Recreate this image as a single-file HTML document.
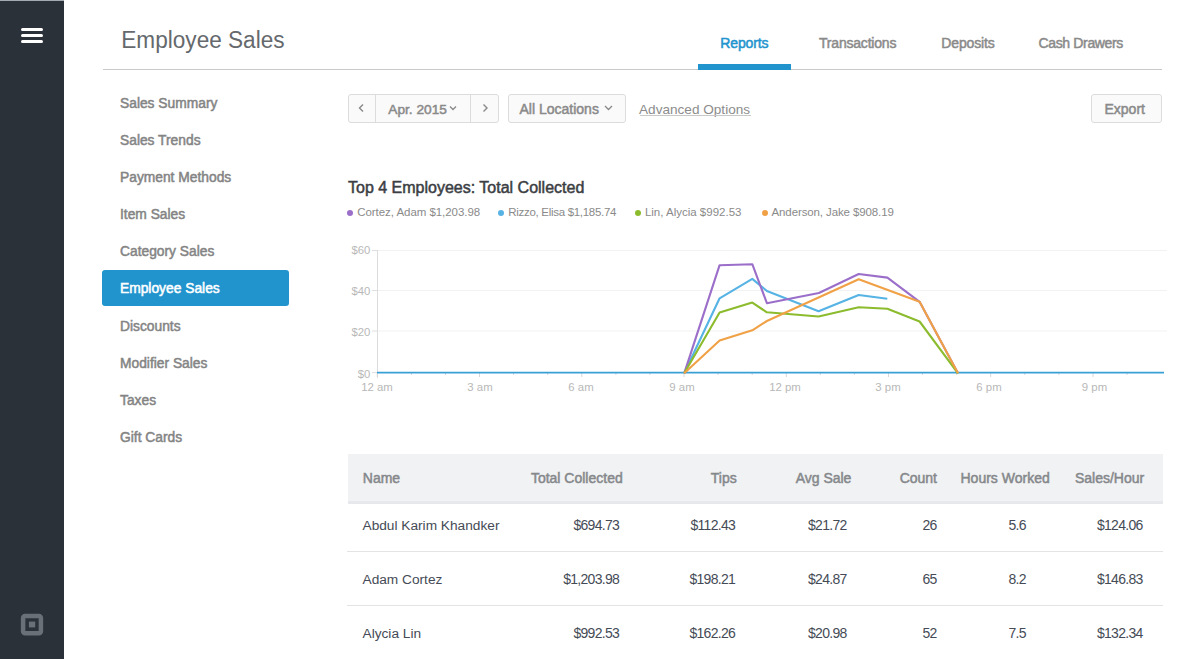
<!DOCTYPE html>
<html><head><meta charset="utf-8"><style>
html,body{margin:0;padding:0;width:1200px;height:659px;overflow:hidden;background:#fff;}
body{position:relative;font-family:"Liberation Sans",sans-serif;}
.t{position:absolute;white-space:nowrap;}
</style></head><body>
<div style="position:absolute;left:0;top:0;width:64px;height:659px;background:#2b3139"></div>
<div style="position:absolute;left:0;top:0;width:64px;height:1px;background:#a4aab0"></div>
<div style="position:absolute;left:21px;top:28px;width:22px;height:3px;border-radius:1.5px;background:#fff"></div>
<div style="position:absolute;left:21px;top:34px;width:22px;height:3px;border-radius:1.5px;background:#fff"></div>
<div style="position:absolute;left:21px;top:40px;width:22px;height:3px;border-radius:1.5px;background:#fff"></div>
<svg style="position:absolute;left:0;top:600px" width="64" height="50"><rect x="23.1" y="16.1" width="17.8" height="17.2" rx="2" fill="none" stroke="#6a7078" stroke-width="4.5"/><rect x="28.9" y="21.6" width="6.3" height="5.8" fill="#6a7078"/></svg>
<div class="t" style="left:121.3px;top:24.57px;font-size:22.6px;line-height:32px;color:#65696d;font-weight:400;transform:scaleY(1.08);transform-origin:0 23.8px;">Employee Sales</div>

<div style="position:absolute;left:103px;top:69px;width:1059px;height:1px;background:#c9c9c9"></div>
<div style="position:absolute;left:698px;top:64px;width:93px;height:6px;background:#2194ce"></div>
<div class="t" style="left:720.3px;top:33.15px;font-size:14px;line-height:20px;color:#2194ce;font-weight:400;-webkit-text-stroke:0.5px currentColor;letter-spacing:-0.15px;">Reports</div>

<div class="t" style="left:819px;top:33.15px;font-size:14px;line-height:20px;color:#8a8a8a;font-weight:400;-webkit-text-stroke:0.5px currentColor;letter-spacing:-0.2px;">Transactions</div>

<div class="t" style="left:941.3px;top:33.15px;font-size:14px;line-height:20px;color:#8a8a8a;font-weight:400;-webkit-text-stroke:0.5px currentColor;letter-spacing:-0.15px;">Deposits</div>

<div class="t" style="left:1038.5px;top:33.15px;font-size:14px;line-height:20px;color:#8a8a8a;font-weight:400;-webkit-text-stroke:0.5px currentColor;letter-spacing:-0.35px;">Cash Drawers</div>

<div style="position:absolute;left:102px;top:270px;width:187px;height:36px;background:#2194ce;border-radius:3px"></div>
<div class="t" style="left:120px;top:93.72px;font-size:13.8px;line-height:19px;color:#848484;font-weight:400;-webkit-text-stroke:0.5px currentColor;">Sales Summary</div>

<div class="t" style="left:120px;top:130.87px;font-size:13.8px;line-height:19px;color:#848484;font-weight:400;-webkit-text-stroke:0.5px currentColor;">Sales Trends</div>

<div class="t" style="left:120px;top:168.02px;font-size:13.8px;line-height:19px;color:#848484;font-weight:400;-webkit-text-stroke:0.5px currentColor;">Payment Methods</div>

<div class="t" style="left:120px;top:205.17px;font-size:13.8px;line-height:19px;color:#848484;font-weight:400;-webkit-text-stroke:0.5px currentColor;">Item Sales</div>

<div class="t" style="left:120px;top:242.32px;font-size:13.8px;line-height:19px;color:#848484;font-weight:400;-webkit-text-stroke:0.5px currentColor;">Category Sales</div>

<div class="t" style="left:120px;top:279.47px;font-size:13.8px;line-height:19px;color:#ffffff;font-weight:400;-webkit-text-stroke:0.5px currentColor;">Employee Sales</div>

<div class="t" style="left:120px;top:316.62px;font-size:13.8px;line-height:19px;color:#848484;font-weight:400;-webkit-text-stroke:0.5px currentColor;">Discounts</div>

<div class="t" style="left:120px;top:353.77px;font-size:13.8px;line-height:19px;color:#848484;font-weight:400;-webkit-text-stroke:0.5px currentColor;">Modifier Sales</div>

<div class="t" style="left:120px;top:390.92px;font-size:13.8px;line-height:19px;color:#848484;font-weight:400;-webkit-text-stroke:0.5px currentColor;">Taxes</div>

<div class="t" style="left:120px;top:428.07px;font-size:13.8px;line-height:19px;color:#848484;font-weight:400;-webkit-text-stroke:0.5px currentColor;">Gift Cards</div>

<div style="position:absolute;left:348px;top:94px;width:149px;height:27px;border:1px solid #dcdcdc;border-radius:3px;background:#fafafa"></div>
<div style="position:absolute;left:375px;top:95px;width:1px;height:27px;background:#dcdcdc"></div>
<div style="position:absolute;left:470px;top:95px;width:1px;height:27px;background:#dcdcdc"></div>
<div class="t" style="left:388.3px;top:99.65px;font-size:13.7px;line-height:19px;color:#8a8a8a;font-weight:400;-webkit-text-stroke:0.5px currentColor;">Apr. 2015</div>

<div style="position:absolute;left:508px;top:94px;width:116px;height:27px;border:1px solid #dcdcdc;border-radius:3px;background:#fafafa"></div>
<svg style="position:absolute;left:0;top:0" width="1200" height="659"><polyline points="363,104.5 359.5,108 363,111.5" fill="none" stroke="#888" stroke-width="1.4"/><polyline points="483.5,104.5 487,108 483.5,111.5" fill="none" stroke="#888" stroke-width="1.4"/><polyline points="450,106.5 453,109.5 456,106.5" fill="none" stroke="#888" stroke-width="1.3"/><polyline points="605,106 608.5,109.5 612,106" fill="none" stroke="#888" stroke-width="1.3"/></svg>
<div class="t" style="left:519.5px;top:99.15px;font-size:14px;line-height:20px;color:#8a8a8a;font-weight:400;-webkit-text-stroke:0.5px currentColor;">All Locations</div>

<div class="t" style="left:639px;top:99.79px;font-size:13.6px;line-height:19px;color:#8c8c8c;font-weight:400;">Advanced Options</div>

<div style="position:absolute;left:640px;top:115px;width:111px;height:1px;background:#c8c8c8"></div>
<div style="position:absolute;left:1091px;top:94px;width:69px;height:27px;border:1px solid #dcdcdc;border-radius:3px;background:#fafafa"></div>
<div class="t" style="left:1104.5px;top:98.95px;font-size:14px;line-height:20px;color:#8a8a8a;font-weight:400;-webkit-text-stroke:0.5px currentColor;">Export</div>

<div class="t" style="left:348px;top:176.95px;font-size:16px;line-height:22px;color:#3b3e43;font-weight:400;-webkit-text-stroke:0.5px currentColor;">Top 4 Employees: Total Collected</div>

<div style="position:absolute;left:347.2px;top:209.5px;width:6px;height:6px;border-radius:50%;background:#9b6fc9"></div>
<div class="t" style="left:357.2px;top:204.41px;font-size:11.5px;line-height:16px;color:#8a8a8a;font-weight:400;letter-spacing:-0.05px;">Cortez, Adam $1,203.98</div>

<div style="position:absolute;left:498.2px;top:209.5px;width:6px;height:6px;border-radius:50%;background:#56b3e4"></div>
<div class="t" style="left:508.3px;top:204.41px;font-size:11.5px;line-height:16px;color:#8a8a8a;font-weight:400;letter-spacing:-0.3px;">Rizzo, Elisa $1,185.74</div>

<div style="position:absolute;left:635px;top:209.5px;width:6px;height:6px;border-radius:50%;background:#8cbc2e"></div>
<div class="t" style="left:644.9px;top:204.41px;font-size:11.5px;line-height:16px;color:#8a8a8a;font-weight:400;letter-spacing:0px;">Lin, Alycia $992.53</div>

<div style="position:absolute;left:761.7px;top:209.5px;width:6px;height:6px;border-radius:50%;background:#f0a146"></div>
<div class="t" style="left:771.5px;top:204.41px;font-size:11.5px;line-height:16px;color:#8a8a8a;font-weight:400;letter-spacing:-0.11px;">Anderson, Jake $908.19</div>

<svg style="position:absolute;left:0;top:0" width="1200" height="659"><line x1="377" y1="250.5" x2="1167" y2="250.5" stroke="#f2f2f2" stroke-width="1"/><line x1="372" y1="250.5" x2="377" y2="250.5" stroke="#dedede" stroke-width="1"/><line x1="377" y1="290.5" x2="1167" y2="290.5" stroke="#f2f2f2" stroke-width="1"/><line x1="372" y1="290.5" x2="377" y2="290.5" stroke="#dedede" stroke-width="1"/><line x1="377" y1="331" x2="1167" y2="331" stroke="#f2f2f2" stroke-width="1"/><line x1="372" y1="331" x2="377" y2="331" stroke="#dedede" stroke-width="1"/><line x1="372" y1="372.6" x2="377" y2="372.6" stroke="#dedede" stroke-width="1"/><line x1="377.5" y1="250" x2="377.5" y2="378" stroke="#dcdcdc" stroke-width="1"/><line x1="377.3" y1="373" x2="377.3" y2="377" stroke="#d8d8d8" stroke-width="1"/><line x1="411.4" y1="373" x2="411.4" y2="375" stroke="#d8d8d8" stroke-width="1"/><line x1="445.5" y1="373" x2="445.5" y2="375" stroke="#d8d8d8" stroke-width="1"/><line x1="479.5" y1="373" x2="479.5" y2="377" stroke="#d8d8d8" stroke-width="1"/><line x1="513.6" y1="373" x2="513.6" y2="375" stroke="#d8d8d8" stroke-width="1"/><line x1="547.7" y1="373" x2="547.7" y2="375" stroke="#d8d8d8" stroke-width="1"/><line x1="581.8" y1="373" x2="581.8" y2="377" stroke="#d8d8d8" stroke-width="1"/><line x1="615.9" y1="373" x2="615.9" y2="375" stroke="#d8d8d8" stroke-width="1"/><line x1="649.9" y1="373" x2="649.9" y2="375" stroke="#d8d8d8" stroke-width="1"/><line x1="684.0" y1="373" x2="684.0" y2="377" stroke="#d8d8d8" stroke-width="1"/><line x1="718.1" y1="373" x2="718.1" y2="375" stroke="#d8d8d8" stroke-width="1"/><line x1="752.2" y1="373" x2="752.2" y2="375" stroke="#d8d8d8" stroke-width="1"/><line x1="786.3" y1="373" x2="786.3" y2="377" stroke="#d8d8d8" stroke-width="1"/><line x1="820.3" y1="373" x2="820.3" y2="375" stroke="#d8d8d8" stroke-width="1"/><line x1="854.4" y1="373" x2="854.4" y2="375" stroke="#d8d8d8" stroke-width="1"/><line x1="888.5" y1="373" x2="888.5" y2="377" stroke="#d8d8d8" stroke-width="1"/><line x1="922.6" y1="373" x2="922.6" y2="375" stroke="#d8d8d8" stroke-width="1"/><line x1="956.7" y1="373" x2="956.7" y2="375" stroke="#d8d8d8" stroke-width="1"/><line x1="990.7" y1="373" x2="990.7" y2="377" stroke="#d8d8d8" stroke-width="1"/><line x1="1024.8" y1="373" x2="1024.8" y2="375" stroke="#d8d8d8" stroke-width="1"/><line x1="1058.9" y1="373" x2="1058.9" y2="375" stroke="#d8d8d8" stroke-width="1"/><line x1="1093.0" y1="373" x2="1093.0" y2="377" stroke="#d8d8d8" stroke-width="1"/><line x1="1127.1" y1="373" x2="1127.1" y2="375" stroke="#d8d8d8" stroke-width="1"/><line x1="377" y1="372.7" x2="1164" y2="372.7" stroke="#3a9fd5" stroke-width="1.7"/><polyline points="684.2,373.3 719.6,298.3 752.3,278.9 766.9,291 818.6,311.2 858.7,295 887.3,298.7" fill="none" stroke="#56b3e4" stroke-width="2.1" stroke-linejoin="round"/><polyline points="684.2,373.3 719.6,265.2 752.3,264.2 766.9,303.2 818.9,293 858.7,274 887.4,277.6 919.6,301.8 958,373.3" fill="none" stroke="#9b6fc9" stroke-width="2.1" stroke-linejoin="round"/><polyline points="684.2,373.3 719.6,312.5 752.3,302.6 766.9,312.3 818.6,316.5 858.7,307.2 887.4,308.8 919.6,321.5 958,373.3" fill="none" stroke="#8cbc2e" stroke-width="2.1" stroke-linejoin="round"/><polyline points="684.2,373.3 719.6,340.4 752.3,330.3 766.9,321 858.7,279.2 919.6,301.8 958,373.3" fill="none" stroke="#f0a146" stroke-width="2.1" stroke-linejoin="round"/></svg>
<div class="t" style="right:829.7px;top:241.63px;font-size:11.3px;line-height:16px;color:#b8b8b8;font-weight:400;">$60</div>

<div class="t" style="right:829.7px;top:283.13px;font-size:11.3px;line-height:16px;color:#b8b8b8;font-weight:400;">$40</div>

<div class="t" style="right:829.7px;top:324.03px;font-size:11.3px;line-height:16px;color:#b8b8b8;font-weight:400;">$20</div>

<div class="t" style="right:829.7px;top:365.53px;font-size:11.3px;line-height:16px;color:#b8b8b8;font-weight:400;">$0</div>

<div class="t" style="left:177px;width:400px;text-align:center;top:378.65px;font-size:11.4px;line-height:16px;color:#b8b8b8;font-weight:400;">12 am</div>

<div class="t" style="left:280px;width:400px;text-align:center;top:378.65px;font-size:11.4px;line-height:16px;color:#b8b8b8;font-weight:400;">3 am</div>

<div class="t" style="left:381px;width:400px;text-align:center;top:378.65px;font-size:11.4px;line-height:16px;color:#b8b8b8;font-weight:400;">6 am</div>

<div class="t" style="left:482px;width:400px;text-align:center;top:378.65px;font-size:11.4px;line-height:16px;color:#b8b8b8;font-weight:400;">9 am</div>

<div class="t" style="left:585px;width:400px;text-align:center;top:378.65px;font-size:11.4px;line-height:16px;color:#b8b8b8;font-weight:400;">12 pm</div>

<div class="t" style="left:688px;width:400px;text-align:center;top:378.65px;font-size:11.4px;line-height:16px;color:#b8b8b8;font-weight:400;">3 pm</div>

<div class="t" style="left:789px;width:400px;text-align:center;top:378.65px;font-size:11.4px;line-height:16px;color:#b8b8b8;font-weight:400;">6 pm</div>

<div class="t" style="left:894.5px;width:400px;text-align:center;top:378.65px;font-size:11.4px;line-height:16px;color:#b8b8b8;font-weight:400;">9 pm</div>

<div style="position:absolute;left:348px;top:454px;width:815px;height:47px;background:#f1f2f4"></div>
<div style="position:absolute;left:348px;top:501px;width:815px;height:3px;background:#e6e8eb"></div>
<div class="t" style="left:362.8px;top:468.45px;font-size:14px;line-height:20px;color:#85888b;font-weight:400;-webkit-text-stroke:0.5px currentColor;">Name</div>

<div class="t" style="right:577.3px;top:468.45px;font-size:14px;line-height:20px;color:#85888b;font-weight:400;-webkit-text-stroke:0.5px currentColor;">Total Collected</div>

<div class="t" style="right:463.29999999999995px;top:468.45px;font-size:14px;line-height:20px;color:#85888b;font-weight:400;-webkit-text-stroke:0.5px currentColor;">Tips</div>

<div class="t" style="right:348.5999999999999px;top:468.45px;font-size:14px;line-height:20px;color:#85888b;font-weight:400;-webkit-text-stroke:0.5px currentColor;">Avg Sale</div>

<div class="t" style="right:263.0px;top:468.45px;font-size:14px;line-height:20px;color:#85888b;font-weight:400;-webkit-text-stroke:0.5px currentColor;">Count</div>

<div class="t" style="right:150.29999999999995px;top:468.45px;font-size:14px;line-height:20px;color:#85888b;font-weight:400;-webkit-text-stroke:0.5px currentColor;">Hours Worked</div>

<div class="t" style="right:55.799999999999955px;top:468.45px;font-size:14px;line-height:20px;color:#85888b;font-weight:400;-webkit-text-stroke:0.5px currentColor;">Sales/Hour</div>

<div class="t" style="left:362.5px;top:515.75px;font-size:13.7px;line-height:19px;color:#454b56;font-weight:400;">Abdul Karim Khandker</div>

<div class="t" style="right:580.9px;top:515.15px;font-size:14px;line-height:20px;color:#454b56;font-weight:400;letter-spacing:-0.7px;">$694.73</div>

<div class="t" style="right:464.9px;top:515.15px;font-size:14px;line-height:20px;color:#454b56;font-weight:400;letter-spacing:-0.7px;">$112.43</div>

<div class="t" style="right:353.4px;top:515.15px;font-size:14px;line-height:20px;color:#454b56;font-weight:400;letter-spacing:-0.7px;">$21.72</div>

<div class="t" style="right:263.4px;top:515.15px;font-size:14px;line-height:20px;color:#454b56;font-weight:400;letter-spacing:-0.7px;">26</div>

<div class="t" style="right:174.20000000000005px;top:515.15px;font-size:14px;line-height:20px;color:#454b56;font-weight:400;letter-spacing:-0.7px;">5.6</div>

<div class="t" style="right:57.40000000000009px;top:515.15px;font-size:14px;line-height:20px;color:#454b56;font-weight:400;letter-spacing:-0.7px;">$124.06</div>

<div class="t" style="left:362.5px;top:569.75px;font-size:13.7px;line-height:19px;color:#454b56;font-weight:400;">Adam Cortez</div>

<div class="t" style="right:580.9px;top:569.15px;font-size:14px;line-height:20px;color:#454b56;font-weight:400;letter-spacing:-0.7px;">$1,203.98</div>

<div class="t" style="right:464.9px;top:569.15px;font-size:14px;line-height:20px;color:#454b56;font-weight:400;letter-spacing:-0.7px;">$198.21</div>

<div class="t" style="right:353.4px;top:569.15px;font-size:14px;line-height:20px;color:#454b56;font-weight:400;letter-spacing:-0.7px;">$24.87</div>

<div class="t" style="right:263.4px;top:569.15px;font-size:14px;line-height:20px;color:#454b56;font-weight:400;letter-spacing:-0.7px;">65</div>

<div class="t" style="right:174.20000000000005px;top:569.15px;font-size:14px;line-height:20px;color:#454b56;font-weight:400;letter-spacing:-0.7px;">8.2</div>

<div class="t" style="right:57.40000000000009px;top:569.15px;font-size:14px;line-height:20px;color:#454b56;font-weight:400;letter-spacing:-0.7px;">$146.83</div>

<div class="t" style="left:362.5px;top:623.75px;font-size:13.7px;line-height:19px;color:#454b56;font-weight:400;">Alycia Lin</div>

<div class="t" style="right:580.9px;top:623.15px;font-size:14px;line-height:20px;color:#454b56;font-weight:400;letter-spacing:-0.7px;">$992.53</div>

<div class="t" style="right:464.9px;top:623.15px;font-size:14px;line-height:20px;color:#454b56;font-weight:400;letter-spacing:-0.7px;">$162.26</div>

<div class="t" style="right:353.4px;top:623.15px;font-size:14px;line-height:20px;color:#454b56;font-weight:400;letter-spacing:-0.7px;">$20.98</div>

<div class="t" style="right:263.4px;top:623.15px;font-size:14px;line-height:20px;color:#454b56;font-weight:400;letter-spacing:-0.7px;">52</div>

<div class="t" style="right:174.20000000000005px;top:623.15px;font-size:14px;line-height:20px;color:#454b56;font-weight:400;letter-spacing:-0.7px;">7.5</div>

<div class="t" style="right:57.40000000000009px;top:623.15px;font-size:14px;line-height:20px;color:#454b56;font-weight:400;letter-spacing:-0.7px;">$132.34</div>

<div style="position:absolute;left:347px;top:551px;width:816px;height:1px;background:#e3e3e3"></div>
<div style="position:absolute;left:347px;top:605px;width:816px;height:1px;background:#e3e3e3"></div>
</body></html>
